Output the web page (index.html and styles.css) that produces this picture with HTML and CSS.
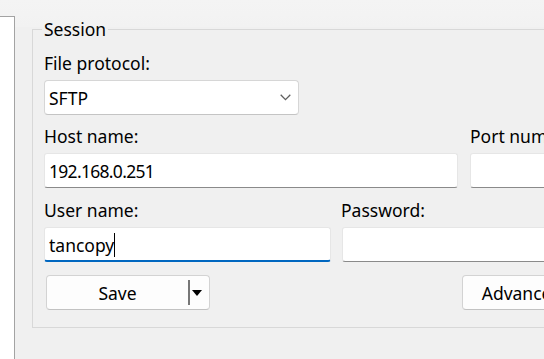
FILE: index.html
```html
<!DOCTYPE html>
<html>
<head>
<meta charset="utf-8">
<link rel="stylesheet" href="styles.css">
</head>
<body>
<div class="window">
  <div class="sitelist"></div>
  <div class="main">
    <fieldset class="session">
      <legend>Session</legend>
      <div class="field">
        <label class="lbl">File protocol:</label>
        <div class="combo"><span>SFTP</span>
          <svg class="chev" width="11" height="7" viewBox="0 0 11 7"><path d="M0.7 0.8 L5.5 5.6 L10.3 0.8" fill="none" stroke="#5f5f5f" stroke-width="1.3"/></svg>
        </div>
      </div>
      <div class="row row2">
        <div class="field host">
          <label class="lbl">Host name:</label>
          <div class="input"><span class="ip">192.168.0.251</span></div>
        </div>
        <div class="field port">
          <label class="lbl">Port number:</label>
          <div class="input"></div>
        </div>
      </div>
      <div class="row row3">
        <div class="field user">
          <label class="lbl">User name:</label>
          <div class="input focused">tancopy<span class="caret"></span></div>
        </div>
        <div class="field pass">
          <label class="lbl">Password:</label>
          <div class="input"></div>
        </div>
      </div>
      <div class="row buttons">
        <div class="btn split"><span class="btn-text">Save</span><span class="sep"></span><span class="arrow"></span></div>
        <div class="btn adv">Advanced...</div>
      </div>
    </fieldset>
  </div>
</div>
</body>
</html>
```
FILE: styles.css
```css
html, body {
  margin: 0;
  padding: 0;
}
body {
  width: 544px;
  height: 359px;
  overflow: hidden;
  background: linear-gradient(to bottom, #f4f4f4 0, #f2f2f2 27px, #f0f0f0 27px);
  font-family: "Noto Sans", "Open Sans", sans-serif;
  font-size: 17.5px;
  color: #000;
}
.window {
  display: flex;
  height: 359px;
}
.sitelist {
  width: 14px;
  flex: none;
  margin-top: 16px;
  background: #fff;
  border-top: 1px solid #a3a3a3;
  border-right: 1px solid #a3a3a3;
}
.main {
  flex: none;
  padding-left: 17px;
  padding-top: 18px;
}
.session {
  margin: 0;
  width: 620px;
  box-sizing: border-box;
  border: 1px solid #d8d8d8;
  padding: 12px 0 17px 11px;
}
.session legend {
  padding: 0 2px;
  margin-left: -2px;
  line-height: 22px;
}
.field {
  display: flex;
  flex-direction: column;
}
.lbl {
  line-height: 22px;
  height: 22px;
  margin-bottom: 6px;
  white-space: nowrap;
}
.combo {
  width: 255px;
  height: 35px;
  box-sizing: border-box;
  background: #fff;
  border: 1px solid #d6d6d6;
  border-bottom-color: #c4c4c4;
  border-radius: 4px;
  display: flex;
  align-items: center;
  justify-content: space-between;
  padding: 0 7px 0 4px;
}
.chev {
  display: block;
}
.row {
  display: flex;
}
.row2 {
  margin-top: 10px;
  gap: 12px;
}
.row3 {
  margin-top: 11px;
  gap: 11px;
}
.host { width: 414px; }
.port { width: 100px; }
.user { width: 287px; }
.pass { width: 260px; }
.pass .lbl { margin-left: -1px; }
.input {
  height: 35px;
  box-sizing: border-box;
  background: #fff;
  border: 1px solid #e6e6e6;
  border-bottom: 1px solid #8a8a8a;
  border-radius: 3px;
  padding: 0 4px;
  display: flex;
  align-items: center;
  white-space: nowrap;
}
.ip {
  letter-spacing: -0.7px;
}
.input.focused {
  border-bottom: 2px solid #0067c0;
  padding-top: 1px;
}
.caret {
  display: inline-block;
  width: 0;
  height: 24px;
  border-left: 1px solid #000;
}
.buttons {
  margin-top: 13px;
  padding-left: 2px;
  gap: 252px;
}
.btn {
  height: 35px;
  box-sizing: border-box;
  background: #fdfdfd;
  border: 1px solid #d3d3d3;
  border-bottom-color: #c2c2c2;
  border-radius: 4px;
  display: flex;
  align-items: center;
  justify-content: center;
  white-space: nowrap;
}
.split {
  width: 164px;
  justify-content: flex-start;
}
.btn-text {
  width: 141px;
  text-align: center;
}
.sep {
  width: 2px;
  height: 25px;
  background: #777;
}
.arrow {
  margin-left: 2px;
  width: 0;
  height: 0;
  border-left: 5px solid transparent;
  border-right: 5px solid transparent;
  border-top: 6px solid #000;
}
.adv {
  width: 134px;
}
```
